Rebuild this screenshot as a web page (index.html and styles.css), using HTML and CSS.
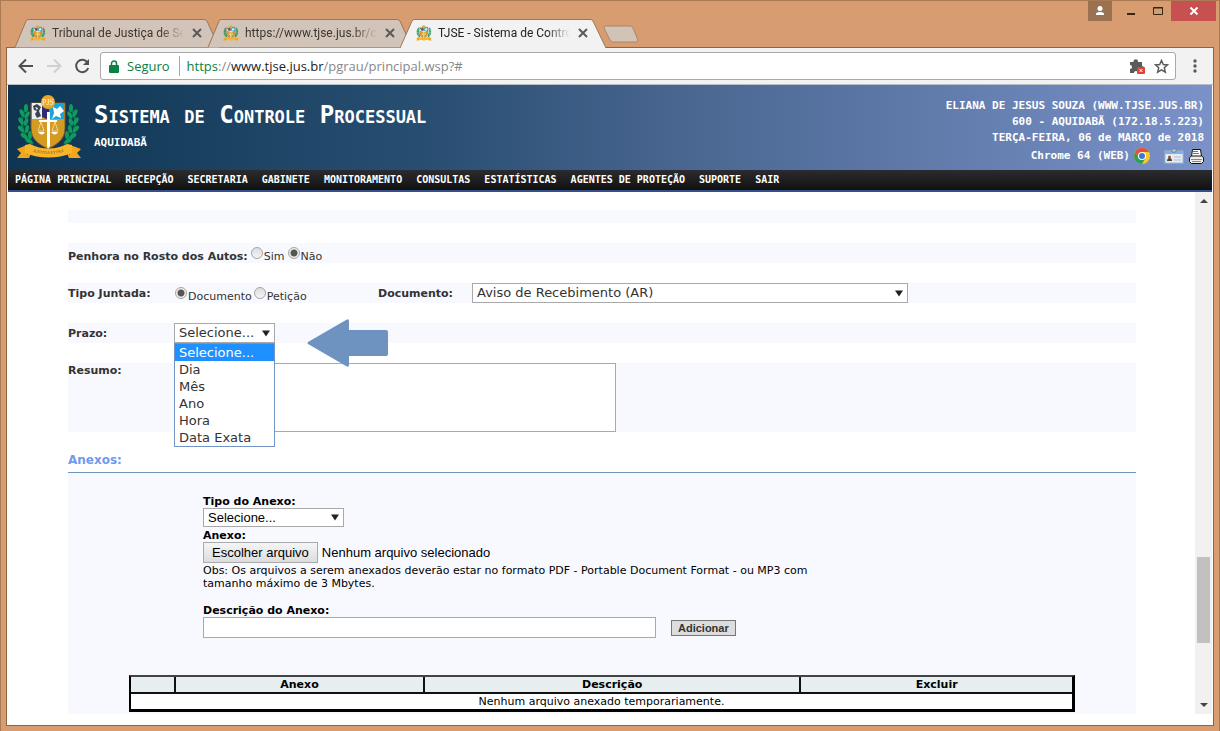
FILE: index.html
```html
<!DOCTYPE html>
<html lang="pt-BR">
<head>
<meta charset="utf-8">
<title>TJSE - Sistema de Controle Processual</title>
<link rel="stylesheet" href="styles.css">
</head>
<body>
<svg class="defs" aria-hidden="true">
  <symbol id="crest" viewBox="0 0 66 64">
    <g fill="none" stroke="#0b7d4c" stroke-width="2"><path d="M11 12C3 23 4 38 17 49"/><path d="M54 12C62 23 61 38 48 49"/></g>
    <g fill="#0f9a5e">
      <ellipse cx="10" cy="13" rx="2" ry="4"/><ellipse cx="6" cy="18" rx="2" ry="4" transform="rotate(-25 6 18)"/><ellipse cx="11" cy="20" rx="2" ry="4" transform="rotate(30 11 20)"/><ellipse cx="5" cy="26" rx="2" ry="4" transform="rotate(-30 5 26)"/><ellipse cx="10" cy="27" rx="2" ry="4" transform="rotate(20 10 27)"/><ellipse cx="5" cy="34" rx="2" ry="4" transform="rotate(-40 5 34)"/><ellipse cx="11" cy="34" rx="2" ry="4" transform="rotate(10 11 34)"/><ellipse cx="8" cy="41" rx="2" ry="4" transform="rotate(-50 8 41)"/><ellipse cx="14" cy="40" rx="2" ry="4"/><ellipse cx="13" cy="46" rx="2" ry="4" transform="rotate(-60 13 46)"/>
      <ellipse cx="55" cy="13" rx="2" ry="4"/><ellipse cx="59" cy="18" rx="2" ry="4" transform="rotate(25 59 18)"/><ellipse cx="54" cy="20" rx="2" ry="4" transform="rotate(-30 54 20)"/><ellipse cx="60" cy="26" rx="2" ry="4" transform="rotate(30 60 26)"/><ellipse cx="55" cy="27" rx="2" ry="4" transform="rotate(-20 55 27)"/><ellipse cx="60" cy="34" rx="2" ry="4" transform="rotate(40 60 34)"/><ellipse cx="54" cy="34" rx="2" ry="4" transform="rotate(-10 54 34)"/><ellipse cx="57" cy="41" rx="2" ry="4" transform="rotate(50 57 41)"/><ellipse cx="51" cy="40" rx="2" ry="4"/><ellipse cx="52" cy="46" rx="2" ry="4" transform="rotate(60 52 46)"/>
    </g>
    <path d="M15 8H49V33C49 44 42 49 32 54C22 49 15 44 15 33Z" fill="#d59b20" stroke="#7a5a2c"/>
    <path d="M16 8H26V24H16Z" fill="#eceff2"/><path d="M17 11l4-2 4 3-2 4 2 5-4 2-2-4 2-3-3-1z" fill="#3d444c"/><path d="M19 12l3 1-1 2z" fill="#fff"/>
    <path d="M26 8H33V25L26 22Z" fill="#2f2c75"/><path d="M33 8H48V24H33Z" fill="#18a4dc"/>
    <path d="M37 12l4 2 3-3 4 5-4 3 1 4-5-2-4 3 2-6z" fill="#fff"/>
    <path d="M31 17h3v8h7v2h-7v24l-2 3-1-3V27h-8v-2h8z" fill="#fff"/>
    <path d="M25 27l-3 9h6zM39 27l-3 9h6z" fill="none" stroke="#f8ebc8" stroke-width=".7"/>
    <path d="M22 37h7q-3 5-7 0M35 37h7q-3 5-7 0" fill="#fff"/>
    <circle cx="32" cy="7" r="7" fill="#eca72b"/>
    <path d="M11 50L1 54l4 4-4 5 12 0 2-5zM54 50l11 4-4 4 4 5-12 0-2-5z" fill="#f0a71d"/>
    <path d="M11 60l4-3-4-7zM54 60l-4-3 4-7z" fill="#9d4e17"/>
    <path d="M9 50l5-1c12 6 25 6 37 0l5 1v8c-15 6-32 6-47 0z" fill="#f7b52c"/>
  </symbol>
</svg>

<div class="titlebar">
  <div class="tabs">
    <div class="tab">
      <svg class="tab-shape" viewBox="0 0 206 29" aria-hidden="true"><path d="M1 28.500L12 2Q13 .5 14 .5H190Q192 .5 193 2L205 28.500"/></svg>
      <svg class="favicon"><use href="#crest"/></svg><span class="tab-title">Tribunal de Justiça de Sergipe</span>
      <button class="tab-close" aria-label="Fechar guia"><svg width="10" height="10"><path d="M1 1l8 8M9 1l-8 8"/></svg></button>
    </div>
    <div class="tab">
      <svg class="tab-shape" viewBox="0 0 206 29" aria-hidden="true"><path d="M1 28.500L12 2Q13 .5 14 .5H190Q192 .5 193 2L205 28.500"/></svg>
      <svg class="favicon"><use href="#crest"/></svg><span class="tab-title">https://www.tjse.jus.br/consultas</span>
      <button class="tab-close" aria-label="Fechar guia"><svg width="10" height="10"><path d="M1 1l8 8M9 1l-8 8"/></svg></button>
    </div>
    <div class="tab active">
      <svg class="tab-shape" viewBox="0 0 206 29" aria-hidden="true"><path d="M0 29L12 2Q13 .5 14 .5H190Q192 .5 193 2L206 29"/></svg>
      <svg class="favicon"><use href="#crest"/></svg><span class="tab-title">TJSE - Sistema de Controle</span>
      <button class="tab-close" aria-label="Fechar guia"><svg width="10" height="10"><path d="M1 1l8 8M9 1l-8 8"/></svg></button>
    </div>
    <button class="new-tab" aria-label="Nova guia"><svg width="36" height="18"><path d="M2 1H27Q29 1 30 3L35 15Q35 17 33 17H10Q8 17 7 15L1 3Q1 1 2 1Z" fill="#d2c3b7" stroke="#a98668"/></svg></button>
  </div>
  <div class="window-buttons">
    <button class="user" aria-label="Usuário"><svg width="10" height="10" fill="#fff"><circle cx="5" cy="2.500" r="2.500"/><path d="M1 9V8q0-2 4-2t4 2v1z"/></svg></button>
    <button class="plain" aria-label="Minimizar"><svg width="12" height="10"><path d="M2 8h8" stroke="#33261b" stroke-width="2"/></svg></button>
    <button class="plain" aria-label="Maximizar"><svg width="12" height="10"><path d="M1.500 1.500h9v7h-9zM1 2h10" fill="none" stroke="#33261b"/></svg></button>
    <button class="close" aria-label="Fechar"><svg width="10" height="8"><path d="M1.500.5l7 7M8.500.5l-7 7" stroke="#fff" stroke-width="2"/></svg></button>
  </div>
</div>

<div class="window">
  <div class="toolbar">
    <button class="tool" aria-label="Voltar"><svg width="16" height="16" fill="none" stroke="#505050" stroke-width="2"><path d="M15 8H2M8 1.500L1.500 8 8 14.500"/></svg></button>
    <button class="tool" aria-label="Avançar"><svg width="16" height="16" fill="none" stroke="#d0d0d0" stroke-width="2"><path d="M1 8h13M8 1.500L14.500 8 8 14.500"/></svg></button>
    <button class="tool" aria-label="Recarregar"><svg width="16" height="16" fill="none" stroke="#505050" stroke-width="2"><path d="M13.500 4.500A6.200 6.200 0 1 0 14.200 10"/><path d="M15 1v6H9z" fill="#505050" stroke="none"/></svg></button>
    <div class="address">
      <svg width="10" height="13"><path d="M2.500 6V3.500a2.500 2.500 0 0 1 5 0V6" fill="none" stroke="#0b8043" stroke-width="1.500"/><rect y="5" width="10" height="8" rx="1" fill="#0b8043"/></svg>
      <span class="secure">Seguro</span>
      <span class="url" role="textbox" aria-label="Endereço"><span class="secure">https</span>://<span class="host">www.tjse.jus.br</span>/pgrau/principal.wsp?#</span>
      <svg width="16" height="16"><path d="M1 4h3.500a2.300 2.300 0 1 1 4.500 0h4v4a2 2 0 1 1 0 4v3H9a2 2 0 0 0-4 0H1v-4a2 2 0 0 0 0-4z" fill="#5a5a5a"/><rect x="8" y="9" width="8" height="7" rx="1" fill="#db4437"/><path d="M10.500 11l3 3M13.500 11l-3 3" stroke="#fff"/></svg>
      <button class="star" aria-label="Favoritar"><svg width="15" height="15"><path d="M7.500 1.500l1.800 4 4.200.4-3.200 2.900 1 4.300-3.800-2.300-3.800 2.300 1-4.300L1.500 5.900l4.200-.4z" fill="none" stroke="#5a5a5a" stroke-width="1.500"/></svg></button>
    </div>
    <button class="menu" aria-label="Menu"><svg width="4" height="14" fill="#5a5a5a"><circle cx="2" cy="2" r="1.700"/><circle cx="2" cy="7" r="1.700"/><circle cx="2" cy="12" r="1.700"/></svg></button>
  </div>

  <header class="banner">
    <svg class="crest" viewBox="0 0 66 64" role="img" aria-label="Brasão">
      <use href="#crest"/>
      <text x="32" y="10" text-anchor="middle" font-size="8" fill="#fff4cf">PJS</text>
      <path id="motto" d="M12 55Q32 63 53 55" fill="none"/>
      <text font-size="4" fill="#714a10"><textPath href="#motto" startOffset="50%" text-anchor="middle">JUSTITIA ET PAX</textPath></text>
    </svg>
    <div class="brand"><h1>Sistema de Controle Processual</h1><p>AQUIDABÃ</p></div>
    <div class="session">
      <p>ELIANA DE JESUS SOUZA (WWW.TJSE.JUS.BR)</p>
      <p>600 - AQUIDABÃ (172.18.5.223)</p>
      <p>TERÇA-FEIRA, 06 de MARÇO de 2018</p>
      <p class="browser">Chrome 64 (WEB)
        <svg class="chrome" width="16" height="16"><circle cx="8" cy="8" r="8" fill="#fbc926"/><path d="M1.100 4A8 8 0 0 1 14.900 4H8L4.500 10z" fill="#e0503f"/><path d="M1.100 4A8 8 0 0 0 8 16l3.500-6H4.500z" fill="#2f9e58"/><circle cx="8" cy="8" r="4" fill="#fff"/><circle cx="8" cy="8" r="3" fill="#3b78d0"/></svg>
        <svg width="20" height="16"><rect x="1" y="3" width="18" height="12" fill="#e4ebf3" stroke="#9fb9da"/><path d="M1 3h18v3H1z" fill="#7fb0e6"/><path d="M8 1h4v3H8z" fill="#cbd3dc" stroke="#75879c"/><rect x="3" y="7" width="5" height="6" fill="#f5f5f5"/><circle cx="5.500" cy="9" r="1.500" fill="#8b5a35"/><path d="M3 13q0-3 2.500-3T8 13z" fill="#4d4036"/><path d="M10 9h7M10 12h7" stroke="#b6bdc6"/></svg>
        <svg width="16" height="16"><path d="M4.500 1.500h8l1 7h-10z" fill="#fff" stroke="#111"/><path d="M5 3.500h5M5 5.500h6" stroke="#777"/><path d="M1.500 9.500l2-1.500h10l2 1.500v4l-2 2h-10l-2-2z" fill="#f0eee8" stroke="#111"/><path d="M3 11.500h11M4 13.500h9" stroke="#888"/></svg>
      </p>
    </div>
  </header>
  <nav class="nav">
    <a href="#">PÁGINA PRINCIPAL</a><a href="#">RECEPÇÃO</a><a href="#">SECRETARIA</a><a href="#">GABINETE</a><a href="#">MONITORAMENTO</a><a href="#">CONSULTAS</a><a href="#">ESTATÍSTICAS</a><a href="#">AGENTES DE PROTEÇÃO</a><a href="#">SUPORTE</a><a href="#">SAIR</a>
  </nav>

  <div class="viewport">
    <main class="content">
      <form class="form">
        <div class="row spacer"></div>
        <div class="row inline" role="radiogroup" aria-labelledby="penhora-titulo">
          <b id="penhora-titulo">Penhora no Rosto dos Autos:</b>
          <label><input type="radio" name="penhora">Sim</label>
          <label><input type="radio" name="penhora" checked>Não</label>
        </div>
        <div class="row">
          <b id="tipo-titulo">Tipo Juntada:</b>
          <div class="radios" role="radiogroup" aria-labelledby="tipo-titulo">
            <label><input type="radio" name="tipo" checked>Documento</label>
            <label><input type="radio" name="tipo">Petição</label>
          </div>
          <label class="strong" for="documento">Documento:</label>
          <span class="select"><select id="documento"><option>Aviso de Recebimento (AR)</option></select><svg class="caret" viewBox="0 0 8 6"><path d="M0 0h8L4 6z"/></svg></span>
        </div>
        <div class="row prazo">
          <label class="strong" for="prazo">Prazo:</label>
          <div class="dropdown">
            <span class="select"><select id="prazo"><option>Selecione...</option></select><svg class="caret" viewBox="0 0 8 6"><path d="M0 0h8L4 6z"/></svg></span>
            <ul class="options" role="listbox" aria-label="Prazo">
              <li role="option" aria-selected="true">Selecione...</li><li role="option">Dia</li><li role="option">Mês</li><li role="option">Ano</li><li role="option">Hora</li><li role="option">Data Exata</li>
            </ul>
          </div>
          <svg class="pointer" width="81" height="48" aria-hidden="true"><path d="M1 23L39 1Q42-1 42 2V11H79Q81 11 81 13V35Q81 37 79 37H42V46Q42 49 39 47L1 25Q0 24 1 23Z" fill="#6e93c1"/></svg>
        </div>
        <div class="row resumo">
          <label class="strong" for="resumo">Resumo:</label>
          <textarea id="resumo"></textarea>
        </div>
      </form>
      <h2>Anexos:</h2>
      <section class="attachments">
        <form class="attach-form">
          <label for="tipo-anexo">Tipo do Anexo:</label>
          <span class="select small"><select id="tipo-anexo"><option>Selecione...</option></select><svg class="caret" viewBox="0 0 8 6"><path d="M0 0h8L4 6z"/></svg></span>
          <label for="arquivo" class="file-label">Anexo:</label>
          <div class="file"><button type="button" id="arquivo">Escolher arquivo</button><span>Nenhum arquivo selecionado</span></div>
          <p>Obs: Os arquivos a serem anexados deverão estar no formato PDF - Portable Document Format - ou MP3 com tamanho máximo de 3 Mbytes.</p>
          <label for="descricao">Descrição do Anexo:</label>
          <div class="add"><input type="text" id="descricao"><button type="button">Adicionar</button></div>
        </form>
        <table>
          <colgroup><col class="c1"><col class="c2"><col class="c3"><col></colgroup>
          <thead><tr><th></th><th>Anexo</th><th>Descrição</th><th>Excluir</th></tr></thead>
          <tbody><tr><td colspan="4">Nenhum arquivo anexado temporariamente.</td></tr></tbody>
        </table>
      </section>
    </main>
    <div class="scrollbar" aria-hidden="true">
      <svg width="8" height="4"><path d="M0 4h8L4 0z"/></svg>
      <div class="track"><div class="thumb"></div></div>
      <svg width="8" height="4"><path d="M0 0h8L4 4z"/></svg>
    </div>
  </div>
</div>
</body>
</html>
```
FILE: styles.css
```css
* { box-sizing: border-box; }
body {
  margin: 0;
  min-height: 100vh;
  display: flex;
  flex-direction: column;
  padding: 0 5px 5px;
  border: 1px solid #ac7a52;
  background: #d79d71;
  color: #333;
  font: 11px/13px "DejaVu Sans", Verdana, sans-serif;
}
button { border: 0; background: none; padding: 0; font: inherit; color: inherit; }
h1, h2, p, ul { margin: 0; padding: 0; }
svg { flex: none; display: block; }
.defs { position: absolute; width: 0; height: 0; }

/* Title bar and tabs */
.titlebar { display: flex; justify-content: space-between; height: 46px; }
.tabs { display: flex; align-items: flex-end; padding-left: 8px; }
.tab {
  position: relative;
  display: flex;
  align-items: center;
  width: 206px;
  height: 28px;
  margin-right: -13px;
  padding-left: 16px;
  color: #3c3732;
  font: 12px/16px Roboto, "Noto Sans", sans-serif;
}
.tab-shape { position: absolute; left: 0; top: 0; width: 206px; height: 29px; fill: #d2c4b9; stroke: #9e7655; }
.tab.active { z-index: 1; color: #222; }
.active .tab-shape { fill: #f2f2f2; }
.favicon { position: relative; width: 16px; height: 16px; margin-right: 6px; }
.tab-title {
  position: relative;
  width: 132px;
  overflow: hidden;
  white-space: nowrap;
  mask-image: linear-gradient(to right, #000 82%, transparent);
}
.tab-close { position: relative; margin-left: 8px; }
.tab-close svg { stroke: #5a5a5a; stroke-width: 2; }
.new-tab { margin: 0 0 4px 10px; }
.window-buttons { display: flex; height: 20px; padding-right: 1px; margin-right: -3px; }
.window-buttons button { display: grid; place-items: center; }
.user { width: 24px; background: #9a7251; margin-right: 5px; }
.plain { width: 27px; }
.close { width: 45px; background: #c75050; }

/* Window frame and toolbar */
.window {
  flex: 1;
  display: flex;
  flex-direction: column;
  padding: 0 1px 11px;
  border: 1px solid #8f6443;
  background: #fff;
}
.toolbar {
  display: flex;
  align-items: center;
  margin: 0 -1px;
  padding: 4px 0 4px 5px;
  border-bottom: 1px solid #b9bec4;
  background: #f2f2f2;
}
.tool { width: 28px; display: grid; place-items: center; }
.address {
  flex: 1;
  display: flex;
  align-items: center;
  height: 28px;
  margin-left: 4px;
  padding: 0 6px 0 8px;
  border: 1px solid #a9a9a9;
  border-radius: 3px;
  background: #fff;
  color: #888;
  font: 13px/20px "Open Sans", "Noto Sans", sans-serif;
}
.secure { color: #0b8043; }
.address > .secure { margin-left: 8px; padding-right: 9px; border-right: 1px solid #aaa; }
.url { flex: 1; margin-left: 7px; }
.host { color: #222; }
.star { margin-left: 9px; }
.menu { width: 37px; display: grid; place-items: center; }

/* Application header */
.banner {
  display: flex;
  min-height: 85px;
  padding: 10px 8px 0;
  background: linear-gradient(to right, #0f3553, #284e72 35%, #48658f 55%, #7b92c9);
  color: #fff;
  font: bold 11px/16px "DejaVu Sans Mono", monospace;
}
.crest { width: 66px; height: 64px; margin-right: 12px; font: 8px "Liberation Serif", serif; }
.brand { flex: 1; padding-top: 6px; }
h1 { font-size: 24px; line-height: 28px; font-variant: small-caps; }
.brand p { margin-top: 6px; }
.session { padding-top: 3px; text-align: right; }
.browser { display: flex; align-items: center; justify-content: flex-end; height: 20px; gap: 4px; }
.chrome { margin-right: 10px; }
.nav {
  display: flex;
  gap: 14px;
  padding: 0 7px;
  border-bottom: 2px solid #34508c;
  background: linear-gradient(#2c2c30, #111);
  font: bold 10px/20px "DejaVu Sans Mono", monospace;
}
.nav a { color: #fff; text-decoration: none; white-space: nowrap; }

/* Page area */
.viewport { flex: 1; display: flex; }
.content { flex: 1; display: flex; flex-direction: column; padding: 18px 59px 0 60px; }
.form { display: grid; gap: 20px; }
.row {
  position: relative;
  display: grid;
  grid-template-columns: 106px 204px 94px 436px;
  align-items: start;
  height: 20px;
  background: #f8f9ff;
  line-height: 22px;
}
.row.spacer { height: 13px; }
.row.inline { display: flex; gap: 3px; line-height: 27px; }
.row label { display: flex; }
.strong { font-weight: bold; }
.radios { display: flex; gap: 2px; padding-left: 1px; line-height: 27px; }
input[type="radio"] {
  appearance: none;
  width: 12px;
  height: 12px;
  margin: 4px 1px 0 0;
  border: 1px solid #a5a5a5;
  border-radius: 50%;
  background: linear-gradient(#ddd, #f4f4f4);
}
input[type="radio"]:checked { background: radial-gradient(circle, #555 3px, #eee 4px); }
.select { display: grid; align-items: center; }
.select > * { grid-area: 1 / 1; }
select, textarea, input[type="text"] {
  margin: 0;
  border: 1px solid #a9a9a9;
  border-radius: 0;
  background: #fff;
  color: #333;
}
select {
  appearance: none;
  width: 100%;
  height: 20px;
  padding: 0 4px;
  font: 13px/18px "DejaVu Sans", Verdana, sans-serif;
}
.caret { justify-self: end; width: 8px; height: 7px; margin-right: 5px; fill: #222; pointer-events: none; }
.dropdown { position: relative; width: 101px; }
.options {
  position: absolute;
  top: 20px;
  left: 0;
  width: 100%;
  border: 1px solid #7195c6;
  background: #fff;
  list-style: none;
  font-size: 13px;
  line-height: 17px;
}
.options li { padding-left: 4px; }
.options [aria-selected="true"] { background: #1e90ff; color: #fff; }
.prazo { z-index: 1; }
.pointer { position: absolute; left: 239px; top: -4px; }
.row.resumo { height: auto; grid-template-columns: 106px 442px; line-height: 15px; }
textarea { height: 69px; resize: none; display: block; }
h2 {
  padding: 20px 0 4px;
  border-bottom: 1px solid #7195b8;
  color: #6f9af0;
  font-size: 12px;
  line-height: 16px;
}

/* Attachments */
.attachments { flex: 1; padding: 23px 61px 2px; background: #f8f9ff; color: #000; }
.attach-form { display: flex; flex-direction: column; align-items: flex-start; margin: 0 0 37px 74px; }
.attach-form label { font-weight: bold; line-height: 12px; }
.select.small { width: 141px; }
.small select { height: 19px; font: 13px/16px "Liberation Sans", Arial, sans-serif; color: #000; }
.file-label { margin-top: 3px; }
.file { display: flex; align-items: center; gap: 4px; font: 13px/19px "Liberation Sans", Arial, sans-serif; }
.file button { padding: 0 8px; border: 1px solid #aaa; background: linear-gradient(#f5f5f5, #ddd); }
.attach-form p { max-width: 640px; margin: 1px 0 15px; }
.add { display: flex; align-items: center; gap: 15px; }
.add input { width: 453px; height: 21px; }
.add button {
  padding: 0 6px;
  border: 1px solid #777;
  background: #ddd;
  color: #333;
  font: bold 11px/14px "Liberation Sans", Arial, sans-serif;
}
table {
  width: 100%;
  table-layout: fixed;
  border: solid #000;
  border-width: 2px 3px 3px 2px;
  border-top-color: #444;
  border-spacing: 0;
  background: #fff;
  text-align: center;
}
th, td { padding: 0; line-height: 15px; }
th { height: 17px; background: #e6eef0; border-bottom: 2px solid #111; }
th + th { border-left: 2px solid #111; }
.c1 { width: 43px; }
.c2 { width: 249px; }
.c3 { width: 40%; }

/* Scrollbar */
.scrollbar {
  width: 17px;
  display: flex;
  flex-direction: column;
  align-items: center;
  padding: 7px 0;
  background: #f1f1f1;
  fill: #444;
}
.track { flex: 1; display: flex; flex-direction: column; width: 13px; padding: 6px 0; }
.track::before { content: ""; flex: 347; }
.track::after { content: ""; flex: 54; }
.thumb { flex: 86; background: #c1c1c1; }
```
